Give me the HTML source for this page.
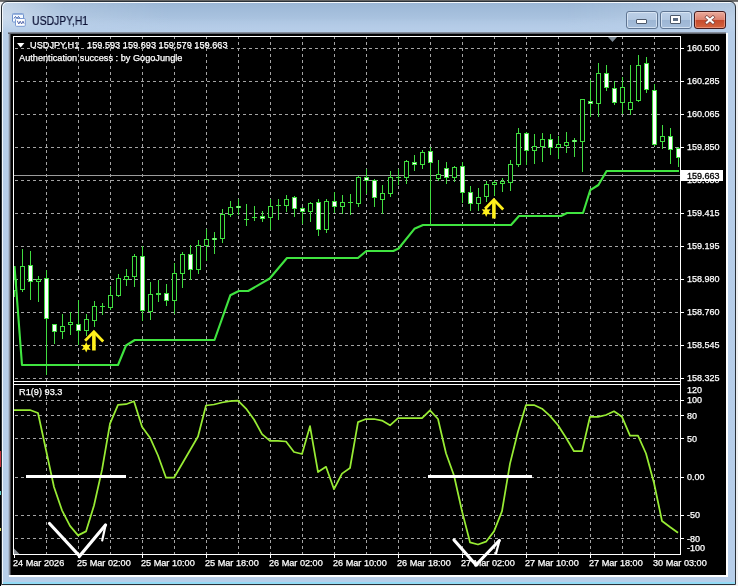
<!DOCTYPE html><html><head><meta charset="utf-8"><title>USDJPY,H1</title><style>
html,body{margin:0;padding:0}
body{width:738px;height:586px;overflow:hidden;position:relative;background:#f2f2f2;font-family:"Liberation Sans",sans-serif}
.abs{position:absolute}
.t{position:absolute;will-change:transform;color:#fff;-webkit-text-stroke:0.25px #fff;font-size:9.2px;line-height:10px;white-space:pre}
.btn{position:absolute;top:11px;width:30px;height:16px;border:1px solid #5f7592;border-radius:3px;
 background:linear-gradient(#bccfe6 0,#b3c8e1 48%,#9db6d4 52%,#a6bedb 100%);box-shadow:inset 0 0 0 1px rgba(225,236,248,.75)}

</style></head><body>
<div class="abs" style="left:0;top:0;width:738px;height:2px;background:linear-gradient(#5a5a5a,#808080)"></div>
<div class="abs" style="left:0;top:32px;width:1px;height:554px;background:#000"></div>
<div class="abs" style="left:0;top:451px;width:1px;height:16px;background:#c42f38"></div>
<div class="abs" style="left:0;top:491px;width:1px;height:4px;background:#5fd0c8"></div>
<div class="abs" style="left:0;top:528px;width:1px;height:3px;background:#d8d860"></div>
<div class="abs" style="left:1px;top:1px;width:733px;height:582px;border:1px solid #2a3138;border-radius:6px 6px 0 0;background:linear-gradient(#9ab6d5 0,#b6cde8 30px,#b7cee9 100%);box-shadow:inset 1px 1px 0 #f4f8fc"></div>
<div class="abs" style="left:3px;top:3px;width:732px;height:29px;border-radius:5px 5px 0 0;background:linear-gradient(rgba(182,205,232,0) 50%,#b6cde8 100%),linear-gradient(90deg,rgba(255,255,255,.42) 0,rgba(255,255,255,.12) 60px,rgba(255,255,255,0) 170px,rgba(255,255,255,0) 560px,rgba(255,255,255,.22) 732px)"></div>
<div class="abs" style="left:3px;top:582px;width:732px;height:2px;background:#93dbf5"></div>
<div class="abs" style="left:9px;top:33px;width:719px;height:544px;background:#fff"></div>
<div class="abs" style="left:8px;top:32px;width:718px;height:543px;background:linear-gradient(#98a2b2,#484c54 2px,#000 2px)"></div>
<div class="abs" style="left:8px;top:34px;width:1px;height:541px;background:#a9bad0"></div>
<div class="abs" style="left:9px;top:34px;width:1px;height:541px;background:#858c98"></div>
<div class="abs" style="left:10px;top:34px;width:1px;height:541px;background:#3c3e44"></div>
<svg width="738" height="586" viewBox="0 0 738 586" style="position:absolute;left:0;top:0">
<defs><clipPath id="cm"><rect x="14" y="37" width="666" height="344"/></clipPath><clipPath id="cs"><rect x="14" y="385" width="666" height="169"/></clipPath></defs>
<rect x="11" y="34" width="715" height="541" fill="#000"/>
<g stroke="#a4a4a4" stroke-width="1" stroke-dasharray="3 3" shape-rendering="crispEdges"><line x1="46.5" y1="36" x2="46.5" y2="381"/><line x1="46.5" y1="384" x2="46.5" y2="554"/><line x1="78.5" y1="36" x2="78.5" y2="381"/><line x1="78.5" y1="384" x2="78.5" y2="554"/><line x1="110.5" y1="36" x2="110.5" y2="381"/><line x1="110.5" y1="384" x2="110.5" y2="554"/><line x1="142.5" y1="36" x2="142.5" y2="381"/><line x1="142.5" y1="384" x2="142.5" y2="554"/><line x1="174.5" y1="36" x2="174.5" y2="381"/><line x1="174.5" y1="384" x2="174.5" y2="554"/><line x1="206.5" y1="36" x2="206.5" y2="381"/><line x1="206.5" y1="384" x2="206.5" y2="554"/><line x1="238.5" y1="36" x2="238.5" y2="381"/><line x1="238.5" y1="384" x2="238.5" y2="554"/><line x1="270.5" y1="36" x2="270.5" y2="381"/><line x1="270.5" y1="384" x2="270.5" y2="554"/><line x1="302.5" y1="36" x2="302.5" y2="381"/><line x1="302.5" y1="384" x2="302.5" y2="554"/><line x1="334.5" y1="36" x2="334.5" y2="381"/><line x1="334.5" y1="384" x2="334.5" y2="554"/><line x1="366.5" y1="36" x2="366.5" y2="381"/><line x1="366.5" y1="384" x2="366.5" y2="554"/><line x1="398.5" y1="36" x2="398.5" y2="381"/><line x1="398.5" y1="384" x2="398.5" y2="554"/><line x1="430.5" y1="36" x2="430.5" y2="381"/><line x1="430.5" y1="384" x2="430.5" y2="554"/><line x1="462.5" y1="36" x2="462.5" y2="381"/><line x1="462.5" y1="384" x2="462.5" y2="554"/><line x1="494.5" y1="36" x2="494.5" y2="381"/><line x1="494.5" y1="384" x2="494.5" y2="554"/><line x1="526.5" y1="36" x2="526.5" y2="381"/><line x1="526.5" y1="384" x2="526.5" y2="554"/><line x1="558.5" y1="36" x2="558.5" y2="381"/><line x1="558.5" y1="384" x2="558.5" y2="554"/><line x1="590.5" y1="36" x2="590.5" y2="381"/><line x1="590.5" y1="384" x2="590.5" y2="554"/><line x1="622.5" y1="36" x2="622.5" y2="381"/><line x1="622.5" y1="384" x2="622.5" y2="554"/><line x1="654.5" y1="36" x2="654.5" y2="381"/><line x1="654.5" y1="384" x2="654.5" y2="554"/></g>
<g stroke="#a4a4a4" stroke-width="1" stroke-dasharray="3 3" shape-rendering="crispEdges"><line x1="15" y1="48.5" x2="680" y2="48.5"/><line x1="15" y1="81.5" x2="680" y2="81.5"/><line x1="15" y1="114.5" x2="680" y2="114.5"/><line x1="15" y1="147.5" x2="680" y2="147.5"/><line x1="15" y1="180.5" x2="680" y2="180.5"/><line x1="15" y1="213.5" x2="680" y2="213.5"/><line x1="15" y1="246.5" x2="680" y2="246.5"/><line x1="15" y1="279.5" x2="680" y2="279.5"/><line x1="15" y1="312.5" x2="680" y2="312.5"/><line x1="15" y1="345.5" x2="680" y2="345.5"/><line x1="15" y1="378.5" x2="680" y2="378.5"/><line x1="15" y1="400.5" x2="680" y2="400.5"/><line x1="15" y1="415.5" x2="680" y2="415.5"/><line x1="15" y1="438.5" x2="680" y2="438.5"/><line x1="15" y1="477.5" x2="680" y2="477.5"/><line x1="15" y1="515.5" x2="680" y2="515.5"/><line x1="15" y1="538.5" x2="680" y2="538.5"/></g>
<rect x="14" y="175" width="666" height="1" fill="#9c9c9c"/>
<g clip-path="url(#cm)" shape-rendering="crispEdges"><rect x="14" y="270" width="1" height="27" fill="#40dc40"/><rect x="12" y="279" width="5" height="12" fill="#40dc40"/><rect x="13" y="280" width="3" height="10" fill="#000"/><rect x="22" y="249" width="1" height="43" fill="#40dc40"/><rect x="20" y="266" width="5" height="24" fill="#40dc40"/><rect x="21" y="267" width="3" height="22" fill="#000"/><rect x="30" y="251" width="1" height="49" fill="#40dc40"/><rect x="28" y="265" width="5" height="17" fill="#40dc40"/><rect x="29" y="266" width="3" height="15" fill="#fff"/><rect x="38" y="276" width="1" height="26" fill="#40dc40"/><rect x="36" y="279" width="5" height="3" fill="#40dc40"/><rect x="37" y="280" width="3" height="1" fill="#000"/><rect x="46" y="270" width="1" height="105" fill="#40dc40"/><rect x="44" y="278" width="5" height="41" fill="#40dc40"/><rect x="45" y="279" width="3" height="39" fill="#fff"/><rect x="54" y="324" width="1" height="20" fill="#40dc40"/><rect x="52" y="324" width="5" height="8" fill="#40dc40"/><rect x="53" y="325" width="3" height="6" fill="#fff"/><rect x="62" y="314" width="1" height="25" fill="#40dc40"/><rect x="60" y="326" width="5" height="6" fill="#40dc40"/><rect x="61" y="327" width="3" height="4" fill="#000"/><rect x="70" y="312" width="1" height="23" fill="#40dc40"/><rect x="68" y="322" width="5" height="3" fill="#40dc40"/><rect x="69" y="323" width="3" height="1" fill="#000"/><rect x="78" y="300" width="1" height="45" fill="#40dc40"/><rect x="76" y="324" width="5" height="7" fill="#40dc40"/><rect x="77" y="325" width="3" height="5" fill="#fff"/><rect x="86" y="314" width="1" height="22" fill="#40dc40"/><rect x="84" y="319" width="5" height="12" fill="#40dc40"/><rect x="85" y="320" width="3" height="10" fill="#000"/><rect x="94" y="301" width="1" height="26" fill="#40dc40"/><rect x="92" y="306" width="5" height="15" fill="#40dc40"/><rect x="93" y="307" width="3" height="13" fill="#000"/><rect x="102" y="303" width="1" height="12" fill="#40dc40"/><rect x="100" y="306" width="5" height="1" fill="#40dc40"/><rect x="110" y="286" width="1" height="24" fill="#40dc40"/><rect x="108" y="295" width="5" height="13" fill="#40dc40"/><rect x="109" y="296" width="3" height="11" fill="#000"/><rect x="118" y="274" width="1" height="23" fill="#40dc40"/><rect x="116" y="278" width="5" height="18" fill="#40dc40"/><rect x="117" y="279" width="3" height="16" fill="#000"/><rect x="126" y="269" width="1" height="17" fill="#40dc40"/><rect x="124" y="276" width="5" height="4" fill="#40dc40"/><rect x="125" y="277" width="3" height="2" fill="#000"/><rect x="134" y="254" width="1" height="33" fill="#40dc40"/><rect x="132" y="256" width="5" height="21" fill="#40dc40"/><rect x="133" y="257" width="3" height="19" fill="#000"/><rect x="142" y="246" width="1" height="75" fill="#40dc40"/><rect x="140" y="256" width="5" height="55" fill="#40dc40"/><rect x="141" y="257" width="3" height="53" fill="#fff"/><rect x="150" y="282" width="1" height="38" fill="#40dc40"/><rect x="148" y="294" width="5" height="18" fill="#40dc40"/><rect x="149" y="295" width="3" height="16" fill="#000"/><rect x="158" y="280" width="1" height="22" fill="#40dc40"/><rect x="156" y="293" width="5" height="2" fill="#40dc40"/><rect x="166" y="284" width="1" height="22" fill="#40dc40"/><rect x="164" y="293" width="5" height="8" fill="#40dc40"/><rect x="165" y="294" width="3" height="6" fill="#fff"/><rect x="174" y="263" width="1" height="51" fill="#40dc40"/><rect x="172" y="273" width="5" height="28" fill="#40dc40"/><rect x="173" y="274" width="3" height="26" fill="#000"/><rect x="182" y="252" width="1" height="36" fill="#40dc40"/><rect x="180" y="254" width="5" height="20" fill="#40dc40"/><rect x="181" y="255" width="3" height="18" fill="#000"/><rect x="190" y="245" width="1" height="35" fill="#40dc40"/><rect x="188" y="254" width="5" height="16" fill="#40dc40"/><rect x="189" y="255" width="3" height="14" fill="#fff"/><rect x="198" y="240" width="1" height="34" fill="#40dc40"/><rect x="196" y="245" width="5" height="25" fill="#40dc40"/><rect x="197" y="246" width="3" height="23" fill="#000"/><rect x="206" y="229" width="1" height="32" fill="#40dc40"/><rect x="204" y="239" width="5" height="7" fill="#40dc40"/><rect x="205" y="240" width="3" height="5" fill="#000"/><rect x="214" y="232" width="1" height="22" fill="#40dc40"/><rect x="212" y="238" width="5" height="2" fill="#40dc40"/><rect x="213" y="238" width="3" height="2" fill="#7df27d"/><rect x="222" y="209" width="1" height="34" fill="#40dc40"/><rect x="220" y="214" width="5" height="25" fill="#40dc40"/><rect x="221" y="215" width="3" height="23" fill="#000"/><rect x="230" y="201" width="1" height="16" fill="#40dc40"/><rect x="228" y="207" width="5" height="8" fill="#40dc40"/><rect x="229" y="208" width="3" height="6" fill="#000"/><rect x="238" y="199" width="1" height="16" fill="#40dc40"/><rect x="236" y="206" width="5" height="2" fill="#40dc40"/><rect x="237" y="206" width="3" height="2" fill="#7df27d"/><rect x="246" y="204" width="1" height="22" fill="#40dc40"/><rect x="244" y="219" width="5" height="1" fill="#40dc40"/><rect x="254" y="206" width="1" height="15" fill="#40dc40"/><rect x="252" y="217" width="5" height="1" fill="#40dc40"/><rect x="262" y="211" width="1" height="11" fill="#40dc40"/><rect x="260" y="216" width="5" height="3" fill="#40dc40"/><rect x="261" y="217" width="3" height="1" fill="#fff"/><rect x="270" y="199" width="1" height="31" fill="#40dc40"/><rect x="268" y="206" width="5" height="12" fill="#40dc40"/><rect x="269" y="207" width="3" height="10" fill="#000"/><rect x="278" y="199" width="1" height="21" fill="#40dc40"/><rect x="276" y="205" width="5" height="1" fill="#40dc40"/><rect x="286" y="195" width="1" height="17" fill="#40dc40"/><rect x="284" y="199" width="5" height="7" fill="#40dc40"/><rect x="285" y="200" width="3" height="5" fill="#000"/><rect x="294" y="196" width="1" height="21" fill="#40dc40"/><rect x="292" y="197" width="5" height="12" fill="#40dc40"/><rect x="293" y="198" width="3" height="10" fill="#fff"/><rect x="302" y="207" width="1" height="17" fill="#40dc40"/><rect x="300" y="208" width="5" height="4" fill="#40dc40"/><rect x="301" y="209" width="3" height="2" fill="#fff"/><rect x="310" y="202" width="1" height="20" fill="#40dc40"/><rect x="308" y="203" width="5" height="9" fill="#40dc40"/><rect x="309" y="204" width="3" height="7" fill="#000"/><rect x="318" y="199" width="1" height="37" fill="#40dc40"/><rect x="316" y="202" width="5" height="28" fill="#40dc40"/><rect x="317" y="203" width="3" height="26" fill="#fff"/><rect x="326" y="199" width="1" height="34" fill="#40dc40"/><rect x="324" y="201" width="5" height="29" fill="#40dc40"/><rect x="325" y="202" width="3" height="27" fill="#000"/><rect x="334" y="192" width="1" height="21" fill="#40dc40"/><rect x="332" y="201" width="5" height="6" fill="#40dc40"/><rect x="333" y="202" width="3" height="4" fill="#fff"/><rect x="342" y="195" width="1" height="19" fill="#40dc40"/><rect x="340" y="202" width="5" height="5" fill="#40dc40"/><rect x="341" y="203" width="3" height="3" fill="#000"/><rect x="350" y="194" width="1" height="21" fill="#40dc40"/><rect x="348" y="202" width="5" height="1" fill="#40dc40"/><rect x="358" y="176" width="1" height="31" fill="#40dc40"/><rect x="356" y="177" width="5" height="27" fill="#40dc40"/><rect x="357" y="178" width="3" height="25" fill="#000"/><rect x="366" y="169" width="1" height="25" fill="#40dc40"/><rect x="364" y="177" width="5" height="4" fill="#40dc40"/><rect x="365" y="178" width="3" height="2" fill="#fff"/><rect x="374" y="179" width="1" height="28" fill="#40dc40"/><rect x="372" y="180" width="5" height="18" fill="#40dc40"/><rect x="373" y="181" width="3" height="16" fill="#fff"/><rect x="382" y="185" width="1" height="29" fill="#40dc40"/><rect x="380" y="193" width="5" height="7" fill="#40dc40"/><rect x="381" y="194" width="3" height="5" fill="#000"/><rect x="390" y="171" width="1" height="26" fill="#40dc40"/><rect x="388" y="177" width="5" height="17" fill="#40dc40"/><rect x="389" y="178" width="3" height="15" fill="#000"/><rect x="398" y="169" width="1" height="16" fill="#40dc40"/><rect x="396" y="177" width="5" height="1" fill="#40dc40"/><rect x="406" y="160" width="1" height="24" fill="#40dc40"/><rect x="404" y="161" width="5" height="17" fill="#40dc40"/><rect x="405" y="162" width="3" height="15" fill="#000"/><rect x="414" y="155" width="1" height="16" fill="#40dc40"/><rect x="412" y="162" width="5" height="3" fill="#40dc40"/><rect x="413" y="163" width="3" height="1" fill="#fff"/><rect x="422" y="150" width="1" height="19" fill="#40dc40"/><rect x="420" y="152" width="5" height="13" fill="#40dc40"/><rect x="421" y="153" width="3" height="11" fill="#000"/><rect x="430" y="147" width="1" height="78" fill="#40dc40"/><rect x="428" y="151" width="5" height="12" fill="#40dc40"/><rect x="429" y="152" width="3" height="10" fill="#fff"/><rect x="438" y="160" width="1" height="21" fill="#40dc40"/><rect x="436" y="174" width="5" height="5" fill="#40dc40"/><rect x="437" y="175" width="3" height="3" fill="#000"/><rect x="446" y="162" width="1" height="22" fill="#40dc40"/><rect x="444" y="168" width="5" height="10" fill="#40dc40"/><rect x="445" y="169" width="3" height="8" fill="#fff"/><rect x="454" y="166" width="1" height="16" fill="#40dc40"/><rect x="452" y="167" width="5" height="11" fill="#40dc40"/><rect x="453" y="168" width="3" height="9" fill="#000"/><rect x="462" y="162" width="1" height="41" fill="#40dc40"/><rect x="460" y="166" width="5" height="27" fill="#40dc40"/><rect x="461" y="167" width="3" height="25" fill="#fff"/><rect x="470" y="186" width="1" height="25" fill="#40dc40"/><rect x="468" y="192" width="5" height="12" fill="#40dc40"/><rect x="469" y="193" width="3" height="10" fill="#fff"/><rect x="478" y="188" width="1" height="23" fill="#40dc40"/><rect x="476" y="197" width="5" height="7" fill="#40dc40"/><rect x="477" y="198" width="3" height="5" fill="#000"/><rect x="486" y="181" width="1" height="21" fill="#40dc40"/><rect x="484" y="184" width="5" height="13" fill="#40dc40"/><rect x="485" y="185" width="3" height="11" fill="#000"/><rect x="494" y="180" width="1" height="16" fill="#40dc40"/><rect x="492" y="182" width="5" height="3" fill="#40dc40"/><rect x="493" y="183" width="3" height="1" fill="#000"/><rect x="502" y="178" width="1" height="14" fill="#40dc40"/><rect x="500" y="181" width="5" height="3" fill="#40dc40"/><rect x="501" y="182" width="3" height="1" fill="#000"/><rect x="510" y="160" width="1" height="31" fill="#40dc40"/><rect x="508" y="164" width="5" height="19" fill="#40dc40"/><rect x="509" y="165" width="3" height="17" fill="#000"/><rect x="518" y="128" width="1" height="39" fill="#40dc40"/><rect x="516" y="133" width="5" height="32" fill="#40dc40"/><rect x="517" y="134" width="3" height="30" fill="#000"/><rect x="526" y="132" width="1" height="33" fill="#40dc40"/><rect x="524" y="133" width="5" height="18" fill="#40dc40"/><rect x="525" y="134" width="3" height="16" fill="#fff"/><rect x="534" y="134" width="1" height="30" fill="#40dc40"/><rect x="532" y="146" width="5" height="5" fill="#40dc40"/><rect x="533" y="147" width="3" height="3" fill="#000"/><rect x="542" y="133" width="1" height="29" fill="#40dc40"/><rect x="540" y="139" width="5" height="8" fill="#40dc40"/><rect x="541" y="140" width="3" height="6" fill="#000"/><rect x="550" y="134" width="1" height="21" fill="#40dc40"/><rect x="548" y="139" width="5" height="9" fill="#40dc40"/><rect x="549" y="140" width="3" height="7" fill="#fff"/><rect x="558" y="136" width="1" height="23" fill="#40dc40"/><rect x="556" y="144" width="5" height="4" fill="#40dc40"/><rect x="557" y="145" width="3" height="2" fill="#000"/><rect x="566" y="132" width="1" height="21" fill="#40dc40"/><rect x="564" y="142" width="5" height="4" fill="#40dc40"/><rect x="565" y="143" width="3" height="2" fill="#000"/><rect x="574" y="138" width="1" height="19" fill="#40dc40"/><rect x="572" y="140" width="5" height="2" fill="#40dc40"/><rect x="573" y="140" width="3" height="2" fill="#7df27d"/><rect x="582" y="99" width="1" height="73" fill="#40dc40"/><rect x="580" y="99" width="5" height="43" fill="#40dc40"/><rect x="581" y="100" width="3" height="41" fill="#000"/><rect x="590" y="80" width="1" height="37" fill="#40dc40"/><rect x="588" y="101" width="5" height="3" fill="#40dc40"/><rect x="589" y="102" width="3" height="1" fill="#fff"/><rect x="598" y="63" width="1" height="54" fill="#40dc40"/><rect x="596" y="73" width="5" height="31" fill="#40dc40"/><rect x="597" y="74" width="3" height="29" fill="#000"/><rect x="606" y="65" width="1" height="26" fill="#40dc40"/><rect x="604" y="73" width="5" height="15" fill="#40dc40"/><rect x="605" y="74" width="3" height="13" fill="#fff"/><rect x="614" y="81" width="1" height="24" fill="#40dc40"/><rect x="612" y="88" width="5" height="15" fill="#40dc40"/><rect x="613" y="89" width="3" height="13" fill="#fff"/><rect x="622" y="77" width="1" height="37" fill="#40dc40"/><rect x="620" y="87" width="5" height="16" fill="#40dc40"/><rect x="621" y="88" width="3" height="14" fill="#000"/><rect x="630" y="65" width="1" height="50" fill="#40dc40"/><rect x="628" y="102" width="5" height="8" fill="#40dc40"/><rect x="629" y="103" width="3" height="6" fill="#000"/><rect x="638" y="55" width="1" height="47" fill="#40dc40"/><rect x="636" y="65" width="5" height="36" fill="#40dc40"/><rect x="637" y="66" width="3" height="34" fill="#000"/><rect x="646" y="57" width="1" height="36" fill="#40dc40"/><rect x="644" y="63" width="5" height="27" fill="#40dc40"/><rect x="645" y="64" width="3" height="25" fill="#fff"/><rect x="654" y="84" width="1" height="62" fill="#40dc40"/><rect x="652" y="90" width="5" height="55" fill="#40dc40"/><rect x="653" y="91" width="3" height="53" fill="#fff"/><rect x="662" y="125" width="1" height="24" fill="#40dc40"/><rect x="660" y="136" width="5" height="6" fill="#40dc40"/><rect x="661" y="137" width="3" height="4" fill="#000"/><rect x="670" y="128" width="1" height="36" fill="#40dc40"/><rect x="668" y="136" width="5" height="14" fill="#40dc40"/><rect x="669" y="137" width="3" height="12" fill="#fff"/><rect x="678" y="147" width="1" height="20" fill="#40dc40"/><rect x="676" y="148" width="5" height="10" fill="#40dc40"/><rect x="677" y="149" width="3" height="8" fill="#fff"/></g>
<polyline clip-path="url(#cm)" points="14.5,266 22,365 118,365 126,345.5 134.8,340 214.5,340 230.3,295.3 238.8,291 248.2,291 269.7,278.5 287,258 358,258 366.3,251 393.3,251 398.6,248.5 414.4,228.8 423,225 511,225 519,216 561,216 567,213 583,213 590.2,190.2 598.4,185 606.6,171 679,171" fill="none" stroke="#40e440" stroke-width="2.1" stroke-linejoin="round"/>
<path d="M85.10000000000001,340.8 L93.9,331.7 L103.2,341.5" fill="none" stroke="#fff01c" stroke-width="2.8" stroke-linejoin="miter" stroke-linecap="butt"/><rect x="92.10000000000001" y="332.5" width="3.6" height="18" fill="#fff01c"/><polygon points="86.20,342.10 87.50,345.05 90.70,344.70 88.80,347.30 90.70,349.90 87.50,349.55 86.20,352.50 84.90,349.55 81.70,349.90 83.60,347.30 81.70,344.70 84.90,345.05" fill="#fff01c"/>
<path d="M485.09999999999997,208.8 L493.9,199.7 L503.2,209.5" fill="none" stroke="#fff01c" stroke-width="2.8" stroke-linejoin="miter" stroke-linecap="butt"/><rect x="492.09999999999997" y="200.5" width="3.6" height="18" fill="#fff01c"/><polygon points="486.20,206.60 487.50,209.55 490.70,209.20 488.80,211.80 490.70,214.40 487.50,214.05 486.20,217.00 484.90,214.05 481.70,214.40 483.60,211.80 481.70,209.20 484.90,209.55" fill="#fff01c"/>
<polygon points="608,37 617,37 612.5,42" fill="#7c8894"/>
<g fill="#fff" shape-rendering="crispEdges"><rect x="13" y="36" width="668" height="1"/><rect x="13" y="36" width="1" height="519"/><rect x="680" y="36" width="1" height="519"/><rect x="13" y="554" width="668" height="1"/><rect x="13" y="381" width="668" height="1"/><rect x="13" y="384" width="668" height="1"/></g><rect x="14" y="382" width="666" height="2" fill="#000"/>
<polyline clip-path="url(#cs)" points="14,410 22,410 30,410 38,413 46,450 54,487 62,510.3 70,525.9 78,535.4 86,531.4 94,505.5 102,469.9 110,423.7 118,404.8 126,404.2 134,401.2 142,426.8 150,437.7 158,455.5 166,477.7 174,477.7 182,464 190,450.3 198,436.5 206,405.5 214,404.5 222,402.5 230,401.2 238,400.6 246,408.6 254,419.5 262,434.2 270,440.9 278,440.9 286,441.5 294,452 302,454 310,426.2 318,472.1 326,466.8 334,489.2 342,473.6 350,468 358,422.1 366,419 374,419 382,420.6 390,425.3 398,418.1 406,418.1 414,418.1 422,418.1 430,410.3 438,419 446,453.3 454,475.5 462,511.1 470,542.3 478,544.5 486,541.7 494,531.4 502,511.1 510,463.6 518,431.5 526,405 534,405 542,408.7 550,415.9 558,425.3 566,437.7 574,451.2 582,451.2 590,416.8 598,416.8 606,415 614,411.3 622,416.8 630,435.6 638,435.6 646,453.5 654,483 662,521 670,527 678,532.7" fill="none" stroke="#98ec34" stroke-width="1.75" stroke-linejoin="round"/>
<polygon points="14,548.5 19.5,554 14,554" fill="#8a9096"/>
<rect x="26" y="475" width="100" height="3" fill="#fff"/>
<rect x="428" y="475" width="104" height="3" fill="#fff"/>
<g fill="#fff" shape-rendering="crispEdges"><rect x="681" y="48" width="3" height="1"/><rect x="681" y="81" width="3" height="1"/><rect x="681" y="114" width="3" height="1"/><rect x="681" y="147" width="3" height="1"/><rect x="681" y="180" width="3" height="1"/><rect x="681" y="213" width="3" height="1"/><rect x="681" y="246" width="3" height="1"/><rect x="681" y="279" width="3" height="1"/><rect x="681" y="312" width="3" height="1"/><rect x="681" y="345" width="3" height="1"/><rect x="681" y="378" width="3" height="1"/><rect x="681" y="400" width="3" height="1"/><rect x="681" y="415" width="3" height="1"/><rect x="681" y="438" width="3" height="1"/><rect x="681" y="477" width="3" height="1"/><rect x="681" y="515" width="3" height="1"/><rect x="681" y="538" width="3" height="1"/><rect x="14" y="555" width="1" height="3"/><rect x="78" y="555" width="1" height="3"/><rect x="142" y="555" width="1" height="3"/><rect x="206" y="555" width="1" height="3"/><rect x="270" y="555" width="1" height="3"/><rect x="334" y="555" width="1" height="3"/><rect x="398" y="555" width="1" height="3"/><rect x="462" y="555" width="1" height="3"/><rect x="526" y="555" width="1" height="3"/><rect x="590" y="555" width="1" height="3"/><rect x="654" y="555" width="1" height="3"/></g>
<rect x="681" y="170" width="42" height="11" fill="#fff" shape-rendering="crispEdges"/>
</svg>
<svg class="abs" style="left:11px;top:12px" width="17" height="17" viewBox="0 0 17 17"><rect x="1.5" y="1.5" width="11" height="8.5" rx="1" fill="#f4f9ff" stroke="#6f93cf"/><rect x="1.5" y="1.5" width="11" height="1.5" fill="#9ab4dc"/><polyline points="3,6.5 4.5,4.5 6,6.5 7.5,4.5 9,6.5" fill="none" stroke="#3b5fa8" stroke-width="1"/><rect x="4.5" y="6.5" width="9.8" height="7.8" rx="1" fill="#fff" stroke="#7a9ad2"/><polyline points="6.3,8.8 7.8,12 9.2,9.2 10.6,12 12,9.2 13,11.6" fill="none" stroke="#4a5fa6" stroke-width="0.9"/></svg>
<div class="abs" style="left:31.6px;top:14px;will-change:transform;font-size:12px;line-height:15px;color:#0c1236;-webkit-text-stroke:0.2px #0c1236;transform:scaleX(0.87);transform-origin:0 0;white-space:pre">USDJPY,H1</div>
<div class="btn" style="left:626px"><div class="abs" style="left:9px;top:7px;width:9px;height:3px;border:1px solid #4c586a;border-radius:1px;background:#fff"></div></div>
<div class="btn" style="left:660px"><div class="abs" style="left:9px;top:3px;width:9px;height:7px;border:1px solid #4c586a;border-radius:1px;background:#fff"><div class="abs" style="left:2px;top:2px;width:5px;height:3px;background:#5b6b82"></div></div></div>
<div class="abs" style="left:694px;top:11px;width:30px;height:16px;border:1px solid #431a1c;border-radius:3px;background:linear-gradient(#e9aa9c 0,#dc8370 48%,#c64a2c 52%,#d4643f 100%);box-shadow:inset 0 0 0 1px rgba(255,200,185,.45)"><svg class="abs" style="left:8px;top:3px" width="14" height="10" viewBox="0 0 14 10"><path d="M3.9,2.3 L9.9,7.5 M9.9,2.3 L3.9,7.5" stroke="#7a4440" stroke-width="3.5" stroke-linecap="square"/><path d="M3.9,2.3 L9.9,7.5 M9.9,2.3 L3.9,7.5" stroke="#fff" stroke-width="2.1" stroke-linecap="square"/></svg></div>
<svg class="abs" style="left:17px;top:43px" width="8" height="5" viewBox="0 0 8 5"><polygon points="0,0 7.4,0 3.7,4.4" fill="#fff"/></svg>
<div class="t" style="left:30px;top:40px">USDJPY,H1   159.593 159.693 159.579 159.663</div>
<div class="t" style="left:19px;top:53px">Authentication success : by GogoJungle</div>
<div class="t" style="left:18.5px;top:387px">R1(9) 93.3</div>
<div class="t" style="left:687px;top:43.1px;font-size:9px">160.500</div>
<div class="t" style="left:687px;top:76.1px;font-size:9px">160.285</div>
<div class="t" style="left:687px;top:109.1px;font-size:9px">160.065</div>
<div class="t" style="left:687px;top:142.1px;font-size:9px">159.850</div>
<div class="t" style="left:687px;top:175.1px;font-size:9px">159.630</div>
<div class="t" style="left:687px;top:208.1px;font-size:9px">159.415</div>
<div class="t" style="left:687px;top:241.1px;font-size:9px">159.195</div>
<div class="t" style="left:687px;top:274.1px;font-size:9px">158.980</div>
<div class="t" style="left:687px;top:307.1px;font-size:9px">158.760</div>
<div class="t" style="left:687px;top:340.1px;font-size:9px">158.545</div>
<div class="t" style="left:687px;top:373.1px;font-size:9px">158.325</div>
<div class="t" style="left:687px;top:385.1px;font-size:9px">120</div>
<div class="t" style="left:687px;top:395.1px;font-size:9px">100</div>
<div class="t" style="left:687px;top:410.6px;font-size:9px">80</div>
<div class="t" style="left:687px;top:433.8px;font-size:9px">50</div>
<div class="t" style="left:687px;top:472.40000000000003px;font-size:9px">0.00</div>
<div class="t" style="left:687px;top:510.4px;font-size:9px">-50</div>
<div class="t" style="left:687px;top:533.5px;font-size:9px">-80</div>
<div class="t" style="left:687px;top:542.6px;font-size:9px">-100</div>
<div class="t" style="left:687px;top:170.6px;font-size:9px;color:#000;-webkit-text-stroke:0.3px #000;background:#fff;width:35px">159.663</div>
<div class="t" style="left:12.8px;top:558.4px;font-size:9.15px">24 Mar 2026</div>
<div class="t" style="left:76.8px;top:558.4px;font-size:9.15px">25 Mar 02:00</div>
<div class="t" style="left:140.8px;top:558.4px;font-size:9.15px">25 Mar 10:00</div>
<div class="t" style="left:204.8px;top:558.4px;font-size:9.15px">25 Mar 18:00</div>
<div class="t" style="left:268.8px;top:558.4px;font-size:9.15px">26 Mar 02:00</div>
<div class="t" style="left:332.8px;top:558.4px;font-size:9.15px">26 Mar 10:00</div>
<div class="t" style="left:396.8px;top:558.4px;font-size:9.15px">26 Mar 18:00</div>
<div class="t" style="left:460.8px;top:558.4px;font-size:9.15px">27 Mar 02:00</div>
<div class="t" style="left:524.8px;top:558.4px;font-size:9.15px">27 Mar 10:00</div>
<div class="t" style="left:588.8px;top:558.4px;font-size:9.15px">27 Mar 18:00</div>
<div class="t" style="left:652.8px;top:558.4px;font-size:9.15px">30 Mar 03:00</div>
<svg width="738" height="586" viewBox="0 0 738 586" style="position:absolute;left:0;top:0">
<g fill="none" stroke="#fff" stroke-linecap="round" stroke-linejoin="miter"><polyline points="49.5,523.5 79.6,556 105.5,525" stroke-width="3.2"/><polyline points="105.6,525 102.2,540.5" stroke-width="2.2"/><polyline points="454,540 476,565 499.3,540.5" stroke-width="3.2"/><polyline points="499.4,540.6 496,553.6" stroke-width="2.2"/></g></svg>
</body></html>
